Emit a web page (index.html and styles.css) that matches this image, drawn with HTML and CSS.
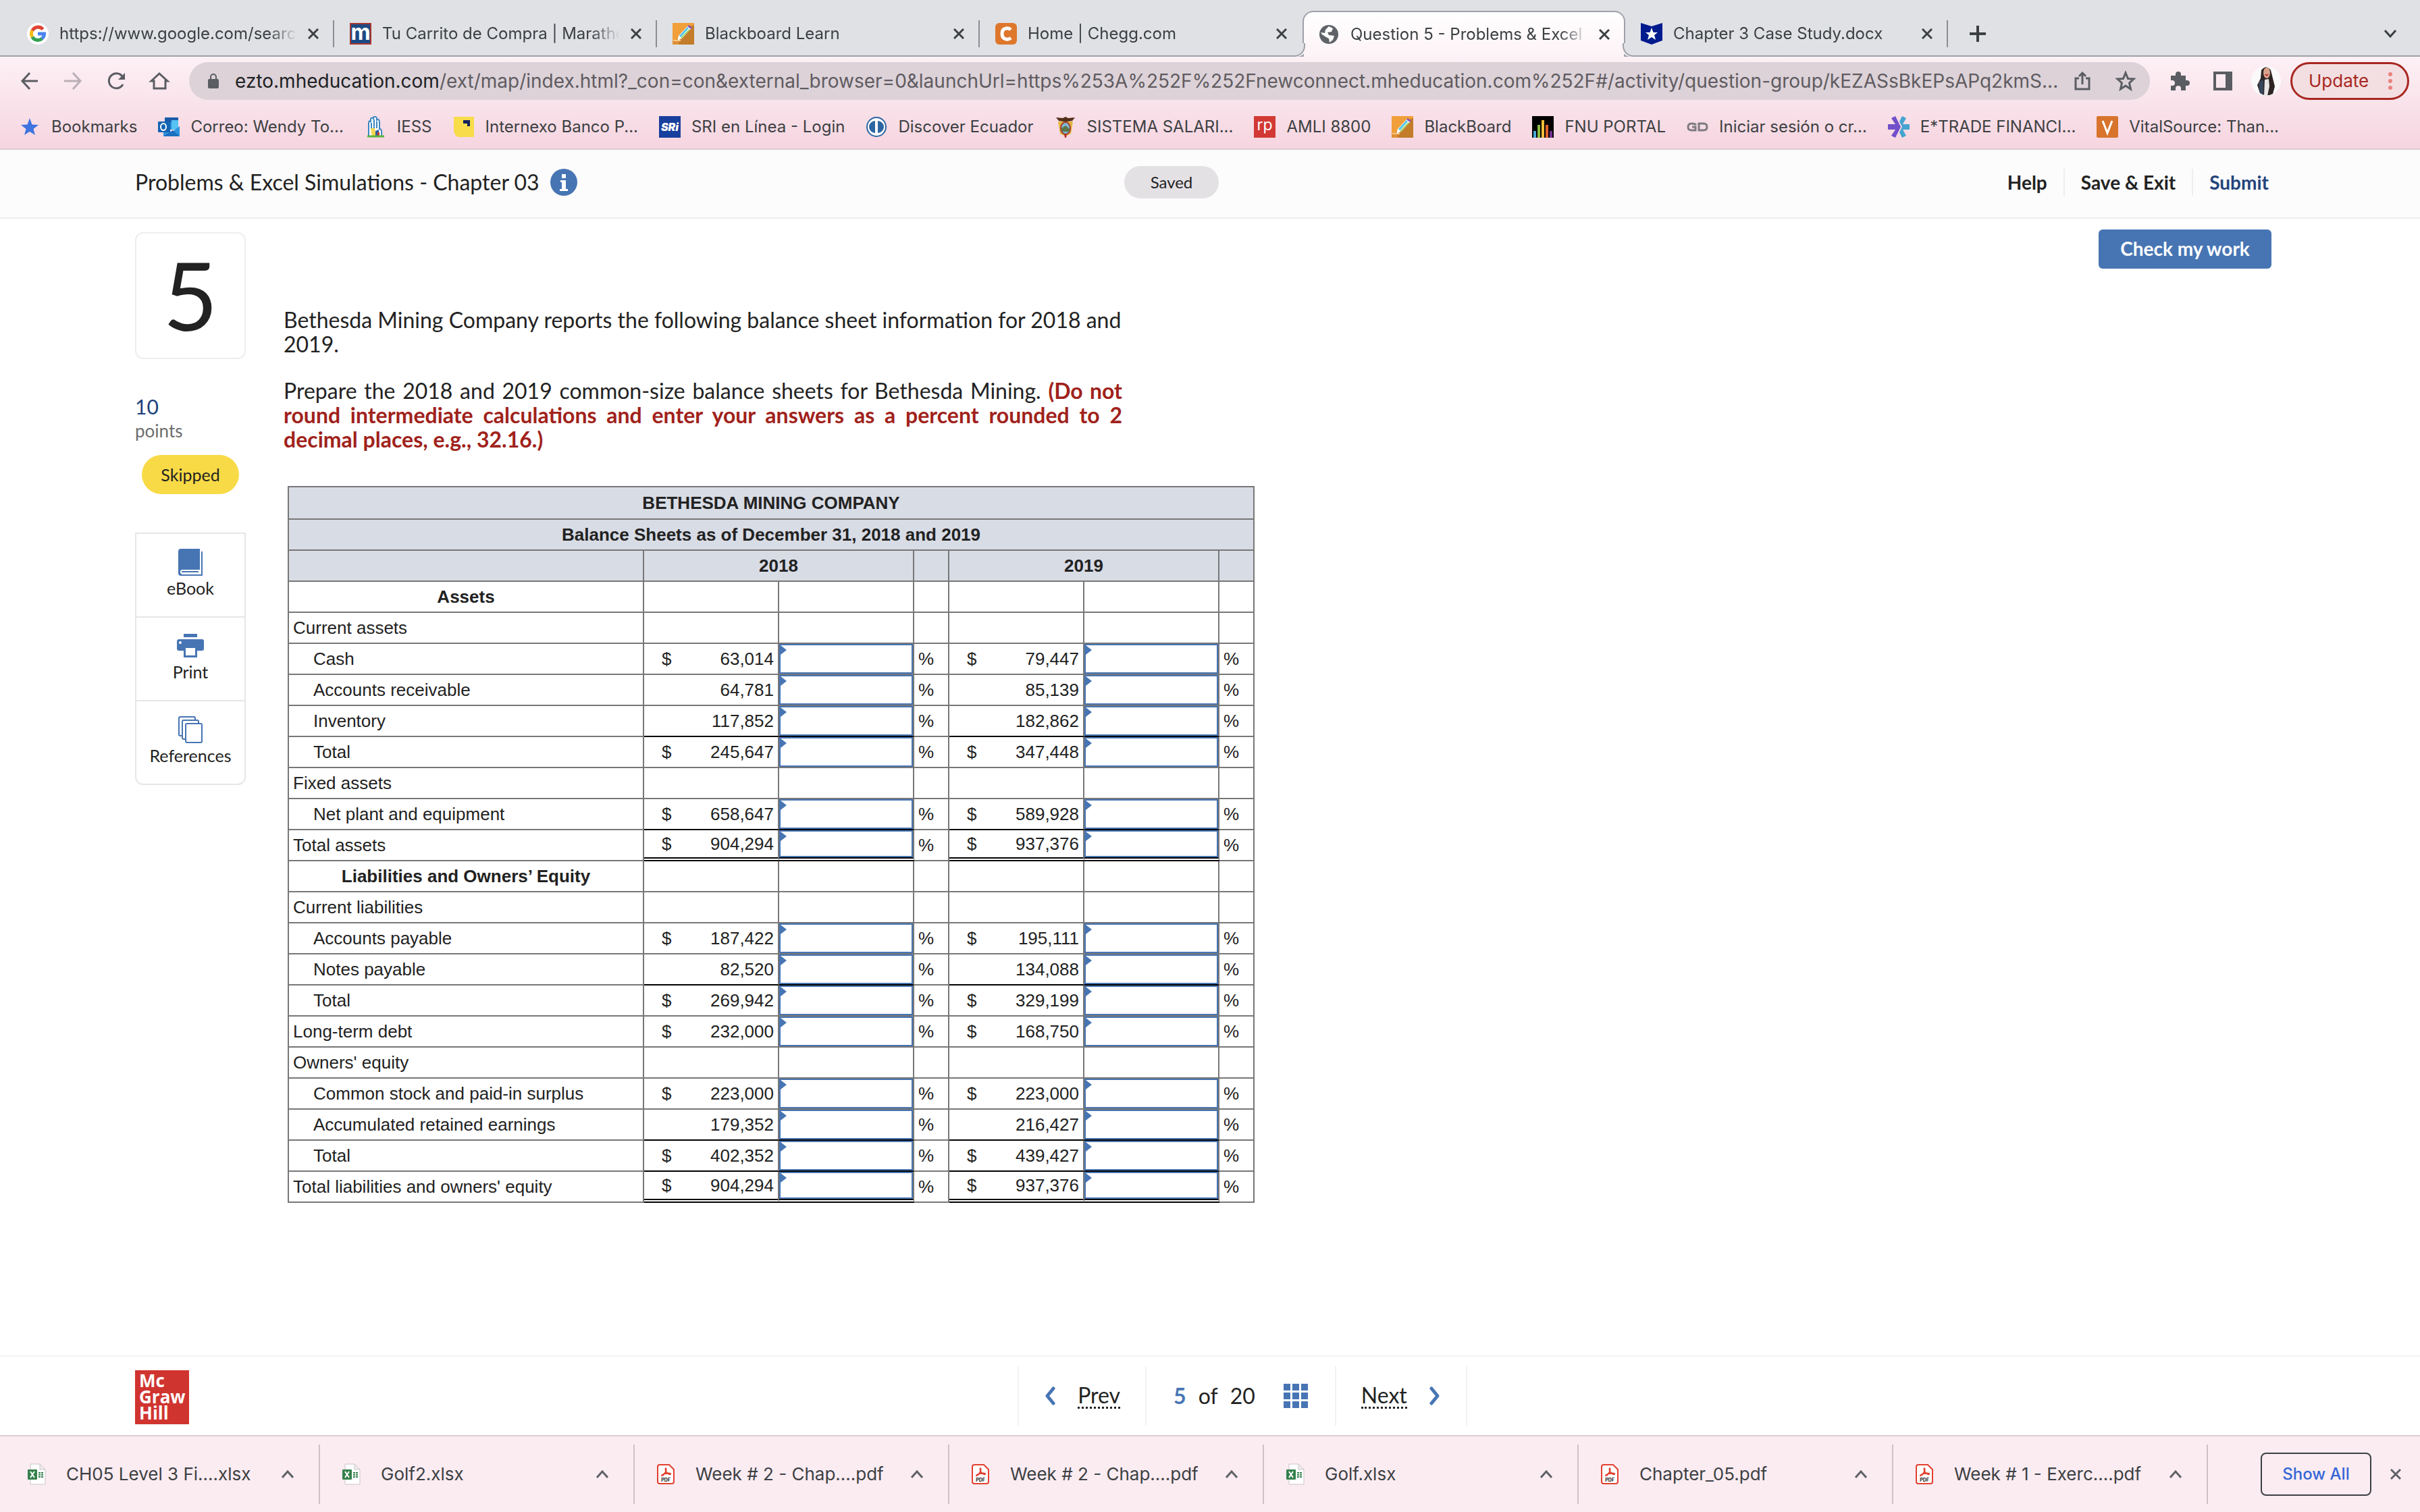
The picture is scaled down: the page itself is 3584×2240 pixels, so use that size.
FILE: index.html
```html
<!DOCTYPE html>
<html lang="en">
<head>
 <meta charset="UTF-8">
 <meta name="viewport" content="width=device-width,initial-scale=1.0">
 <title>Question 5 - Problems &amp; Excel Simulations - Chapter 03</title>
 <link rel="stylesheet" href="styles.css">
</head>
<body>
<!-- shared icons -->
<svg class="defs" aria-hidden="true">
 <symbol id="i-close" viewBox="0 0 16 16"><path d="M1 1L15 15M15 1L1 15" fill="none" stroke="currentColor" stroke-width="3"/></symbol>
 <symbol id="i-up" viewBox="0 0 18 12"><path d="M1 11L9 2L17 11" fill="none" stroke="currentColor" stroke-width="3"/></symbol>
 <symbol id="i-pencil" viewBox="0 0 32 32">
  <rect width="32" height="32" fill="#f09f3a"/><path d="M32 3V32H10L4 26L26 5Z" fill="#c27c2a"/><path d="M0 26H11L8 32H0Z" fill="#e08f35"/>
  <path d="M7 26L9 19L23 4L28 8L14 23Z" fill="#fff"/><path d="M10 19L22 6L24 8L12 21Z" fill="#4fc3e8"/><path d="M12 22L25 9L26 10L13 23Z" fill="#7fc843"/><path d="M22 5L24 3L29 7L27 9Z" fill="#8c4fb5"/><path d="M1 26H12" stroke="#f8c98a" stroke-width="2"/>
 </symbol>
 <symbol id="i-xls" viewBox="0 0 28 32">
  <path d="M5 1H19L27 9V31H5Z" fill="#fff" stroke="#c9c4c8" stroke-width="1"/><path d="M19 1V9H27Z" fill="#eee" stroke="#c9c4c8"/>
  <path d="M17 13h3v2h-3zM21 13h3v2h-3zM17 16h3v2h-3zM21 16h3v2h-3zM17 19h3v2h-3zM21 19h3v2h-3z" fill="#2f7d4a"/>
  <rect x="1" y="9" width="14" height="15" rx="1" fill="#35804c"/><path d="M5 12L11 21M11 12L5 21" stroke="#fff" stroke-width="2"/>
 </symbol>
 <symbol id="i-pdf" viewBox="0 0 28 32">
  <path d="M5 2H19L26 9V27Q26 30 23 30H5Q2 30 2 27V5Q2 2 5 2Z" fill="#fff" stroke="#e2402f" stroke-width="2"/>
  <path d="M8 18C12 17 15 12 14.500 8C14 6 13 8 14 11C15 14 19 17 21 16C22 15 19 14 15 15C12 15 8 17 8 18Z" fill="none" stroke="#e2402f" stroke-width="2"/>
  <text x="14" y="27" font-size="7" font-weight="700" text-anchor="middle" fill="#222">PDF</text>
 </symbol>
</svg>

<header class="browser">
 <nav class="tabs" aria-label="Tabs">
  <div class="tab">
   <svg class="fav" viewBox="0 0 32 32"><circle cx="16" cy="16" r="16" fill="#fff"/><g fill="none" stroke-width="5"><path d="M23.500 9.500A9.500 9.500 0 0 0 7.800 11.300" stroke="#e04435"/><path d="M7.800 11.300A9.500 9.500 0 0 0 7.800 20.700" stroke="#f5bb16"/><path d="M7.800 20.700A9.500 9.500 0 0 0 22.100 23.300" stroke="#34a152"/><path d="M22.100 23.300A9.500 9.500 0 0 0 25.500 16H16" stroke="#4a85ee"/></g></svg>
   <span class="tab-title">https://www.google.com/search</span>
   <button class="close" aria-label="Close tab"><svg><use href="#i-close"/></svg></button>
  </div>
  <div class="tab">
   <svg class="fav" viewBox="0 0 32 32"><rect x="1" y="1" width="30" height="30" fill="#1d4a85" stroke="#a8362f" stroke-width="2"/><text x="16" y="25" font-size="32" font-weight="700" text-anchor="middle" fill="#fff">m</text></svg>
   <span class="tab-title">Tu Carrito de Compra | Marathon</span>
   <button class="close" aria-label="Close tab"><svg><use href="#i-close"/></svg></button>
  </div>
  <div class="tab">
   <svg class="fav"><use href="#i-pencil"/></svg>
   <span class="tab-title">Blackboard Learn</span>
   <button class="close" aria-label="Close tab"><svg><use href="#i-close"/></svg></button>
  </div>
  <div class="tab before-active">
   <svg class="fav" viewBox="0 0 32 32"><rect width="32" height="32" rx="6" fill="#de772c"/><path d="M23 10Q20 7 16 8Q10 9 10 16Q10 23 16 24Q20 25 23 22" fill="none" stroke="#fff" stroke-width="5"/></svg>
   <span class="tab-title">Home | Chegg.com</span>
   <button class="close" aria-label="Close tab"><svg><use href="#i-close"/></svg></button>
  </div>
  <div class="tab active">
   <svg class="fav" viewBox="0 0 32 32"><circle cx="16" cy="16" r="14" fill="#5f6368"/><path d="M16 4L22 7L20 12L14 13L16 17L24 18L22 24L17 28L16 22L12 20L6 16L4 13L10 14L11 9Z" fill="#fff"/></svg>
   <span class="tab-title">Question 5 - Problems &amp; Excel Simulations</span>
   <button class="close" aria-label="Close tab"><svg><use href="#i-close"/></svg></button>
  </div>
  <div class="tab">
   <svg class="fav" viewBox="0 0 32 32"><path d="M0 0L16 5L32 0V26L16 32L0 26Z" fill="#001b8d"/><path d="M16 7L18.500 14H25L20 18L22 25L16 21L10 25L12 18L7 14H13.500Z" fill="#fff"/></svg>
   <span class="tab-title">Chapter 3 Case Study.docx</span>
   <button class="close" aria-label="Close tab"><svg><use href="#i-close"/></svg></button>
  </div>
  <button class="new-tab" aria-label="New tab"><svg viewBox="0 0 24 24"><path d="M12 0V24M0 12H24" stroke="currentColor" stroke-width="4"/></svg></button>
  <button class="tab-search" aria-label="Search tabs"><svg viewBox="0 0 18 12"><path d="M1 1L9 10L17 1" fill="none" stroke="currentColor" stroke-width="3"/></svg></button>
 </nav>

 <div class="toolbar">
  <button class="tool" aria-label="Back"><svg viewBox="0 0 32 32"><path d="M28 16H6M16 4L5 16L16 28" fill="none" stroke="currentColor" stroke-width="3"/></svg></button>
  <button class="tool off" aria-label="Forward" disabled><svg viewBox="0 0 32 32"><path d="M3 16H26M16 4L27 16L16 28" fill="none" stroke="currentColor" stroke-width="3"/></svg></button>
  <button class="tool" aria-label="Reload"><svg viewBox="0 0 32 32"><path d="M26 21A11 11 0 1 1 25 9" fill="none" stroke="currentColor" stroke-width="3"/><path d="M29 4V14H19Z" fill="currentColor"/></svg></button>
  <button class="tool" aria-label="Home"><svg viewBox="0 0 32 32"><path d="M4 16L16 5L28 16H25V27H8V16Z" fill="none" stroke="currentColor" stroke-width="3"/></svg></button>
  <div class="address">
   <svg class="lock" viewBox="0 0 18 22"><rect x="1" y="8" width="16" height="14" rx="2" fill="currentColor"/><path d="M5 9V5A4 4 0 0 1 13 5V9" fill="none" stroke="currentColor" stroke-width="2"/></svg>
   <span class="url"><b>ezto.mheducation.com</b>/ext/map/index.html?_con=con&amp;external_browser=0&amp;launchUrl=https%253A%252F%252Fnewconnect.mheducation.com%252F#/activity/question-group/kEZASsBkEPsAPq2kmS...</span>
   <button class="tool" aria-label="Share"><svg viewBox="0 0 32 32"><path d="M11 12H6V28H26V12H21M16 21V4M11 9L16 4L21 9" fill="none" stroke="currentColor" stroke-width="3"/></svg></button>
   <button class="tool" aria-label="Bookmark this page"><svg viewBox="0 0 32 32"><path d="M16 4L19.500 12.500L28 13L21.500 19L23.500 28L16 23L8.500 28L10.500 19L4 13L12.500 12.500Z" fill="none" stroke="currentColor" stroke-width="3"/></svg></button>
  </div>
  <button class="tool" aria-label="Extensions"><svg viewBox="0 0 32 32"><path d="M3 8H10V6A4 4 0 0 1 18 6V8H25V15H27A4 4 0 0 1 27 23H25V30H18V27A4 4 0 0 0 10 27V30H3V23H5A4 4 0 0 0 5 15H3Z" fill="currentColor"/></svg></button>
  <button class="tool" aria-label="Side panel"><svg viewBox="0 0 32 32"><path d="M2 2H30V30H2ZM6 6V26H20V6Z" fill="currentColor" fill-rule="evenodd"/></svg></button>
  <button class="avatar" aria-label="Profile"><svg viewBox="0 0 44 44"><circle cx="22" cy="22" r="22" fill="#fbfafa"/><path d="M15 6Q22 -3 29 6L32 18L35 30L32 41Q22 46 13 40L9 28L14 18Z" fill="#2c2524"/><ellipse cx="23" cy="10" rx="5" ry="8" fill="#d9a28c"/><path d="M20 20L26 19L27 30L24 44H19Z" fill="#e9e6e8"/><path d="M11 24L18 20L18 43L12 38Z" fill="#38465c"/><path d="M21 12Q23 15 25 12" stroke="#b5343a" stroke-width="2" fill="none"/></svg></button>
  <button class="update">Update<svg viewBox="0 0 6 28"><circle cx="3" cy="4" r="3"/><circle cx="3" cy="14" r="3"/><circle cx="3" cy="24" r="3"/></svg></button>
 </div>

 <nav class="bookmarks" aria-label="Bookmarks">
  <a href="#"><svg class="fav" viewBox="0 0 32 32"><path d="M16 3L19.500 12.500L29 13L21.500 19L24 28L16 23L8 28L10.500 19L3 13L12.500 12.500Z" fill="#3f74e0"/></svg>Bookmarks</a>
  <a href="#"><svg class="fav" viewBox="0 0 32 32"><rect x="10" y="2" width="20" height="18" fill="#1a5ba8"/><path d="M10 9H20V20H10Z" fill="#2b8ad8"/><path d="M20 6H30V20H20Z" fill="#55c2f3"/><path d="M8 17L20 24L32 15V30H8Z" fill="#2e92dd"/><path d="M8 30L22 21L32 30Z" fill="#1b6fc0"/><rect y="8" width="18" height="16" rx="1" fill="#1464b4"/><ellipse cx="8" cy="16" rx="4" ry="5" fill="none" stroke="#fff" stroke-width="2"/></svg>Correo: Wendy To...</a>
  <a href="#"><svg class="fav" viewBox="0 0 32 32"><path d="M6 30V10Q7 5 9 9V4Q11 1 13 4V2Q16 -1 18 3V6Q22 3 22 10V19Q26 18 25 30" fill="#fff" stroke="#3a86c0" stroke-width="2"/><path d="M10 10V20M14 5V18M18 8V18" stroke="#3a86c0" stroke-width="2"/><path d="M9 18H15L17 30H11Z" fill="#f2d64e"/><path d="M16 22L21 20V30H16Z" fill="#2b5ca5"/><path d="M19 24H22V30H19Z" fill="#cc392f"/><path d="M4 30H29" stroke="#5ab53e" stroke-width="3"/></svg>IESS</a>
  <a href="#"><svg class="fav" viewBox="0 0 32 32"><path d="M1 1H31V31H8Q1 29 1 20Z" fill="#f8dc49"/><path d="M15 6H25V15H21V11H15Z" fill="#12225e"/></svg>Internexo Banco P...</a>
  <a href="#"><svg class="fav" viewBox="0 0 32 32"><rect width="32" height="32" fill="#193f9c"/><text x="16" y="22" font-size="16" font-weight="900" font-style="italic" text-anchor="middle" fill="#fff">SRi</text></svg>SRI en Línea - Login</a>
  <a href="#"><svg class="fav" viewBox="0 0 32 32"><circle cx="16" cy="16" r="14" fill="#fff" stroke="#2c66a2" stroke-width="2"/><path d="M14 7A9 9 0 0 0 14 25ZM18 7A9 9 0 0 1 18 25Z" fill="#2c66a2"/></svg>Discover Ecuador</a>
  <a href="#"><svg class="fav" viewBox="0 0 32 32"><path d="M2 2L12 3L16 1L20 3L30 2L26 7L19 8H13L6 7Z" fill="#53301a"/><path d="M5 8H27L24 26L16 30L8 26Z" fill="#e3b63f"/><ellipse cx="16" cy="18" rx="7" ry="9" fill="#7db9d6" stroke="#a53b2f" stroke-width="2"/><path d="M10 18L16 14L22 19V23H10Z" fill="#5e7548"/><path d="M14 27H18L17 32H15Z" fill="#bb2f2a"/></svg>SISTEMA SALARI...</a>
  <a href="#"><svg class="fav" viewBox="0 0 32 32"><rect width="32" height="32" fill="#d23934"/><text x="16" y="21" font-size="23" text-anchor="middle" fill="#fff">rp</text></svg>AMLI 8800</a>
  <a href="#"><svg class="fav"><use href="#i-pencil"/></svg>BlackBoard</a>
  <a href="#"><svg class="fav" viewBox="0 0 32 32"><rect width="32" height="32" fill="#000"/><path d="M2 22H6V32H2Z" fill="#4aa8d8"/><path d="M8 13H12V32H8Z" fill="#8dbb3f"/><path d="M14 6H18V32H14Z" fill="#f2bd38"/><path d="M20 13H24V32H20Z" fill="#e2612d"/><path d="M26 22H30V32H26Z" fill="#713293"/></svg>FNU PORTAL</a>
  <a href="#"><svg class="fav" viewBox="0 0 32 32"><path d="M14 13Q12 11 7 11Q2 11 2 16Q2 21 7 21H13V16H8M18 11H25Q30 11 30 16Q30 21 25 21H18Z" fill="none" stroke="#7f7b80" stroke-width="3"/></svg>Iniciar sesión o cr...</a>
  <a href="#"><svg class="fav" viewBox="0 0 32 32"><path d="M0 12H11L5 3L11 0L19 16L11 32L5 29L11 20H0Z" fill="#7150ca"/><path d="M21 0L27 3L22 12H32V20H22L27 29L21 32L17 24L21 16L17 8Z" fill="#46a3d0"/></svg>E*TRADE FINANCI...</a>
  <a href="#"><svg class="fav" viewBox="0 0 32 32"><rect width="32" height="32" rx="2" fill="#d8742c"/><path d="M9 7L16 25L23 7" fill="none" stroke="#fff" stroke-width="3"/></svg>VitalSource: Than...</a>
 </nav>
</header>

<section class="page-head">
 <h1>Problems &amp; Excel Simulations - Chapter 03
  <button class="info" aria-label="Assignment info"><svg viewBox="0 0 40 40"><circle cx="20" cy="20" r="20" fill="#4775b4"/><path d="M17 8H23V14H17ZM15 17H23V30H26V33H14V30H17V20H15Z" fill="#fff"/></svg></button>
 </h1>
 <div class="saved"><span>Saved</span></div>
 <nav class="actions">
  <a href="#">Help</a>
  <a href="#">Save &amp; Exit</a>
  <a href="#" class="submit">Submit</a>
 </nav>
</section>

<main class="question">
 <aside class="side">
  <div class="number">5</div>
  <div class="points">10</div>
  <div class="points-label">points</div>
  <div class="status">Skipped</div>
  <nav class="resources">
   <a href="#"><svg viewBox="0 0 40 40"><path d="M6 0H34V31H8Q5 31 5 34Q5 37 8 38H34V40H6Q2 40 2 36V4Q2 0 6 0Z" fill="#4775b4"/><path d="M7 34H32" stroke="#4775b4" stroke-width="2"/><path d="M37 4V39H33" fill="none" stroke="#4775b4" stroke-width="2"/></svg>eBook</a>
   <a href="#"><svg viewBox="0 0 40 40"><path d="M10 2H30V7H10ZM3 10H37Q40 10 40 13V24Q40 27 37 27H30V37H10V27H3Q0 27 0 24V13Q0 10 3 10ZM13 23V34H27V23Z" fill="#4775b4" fill-rule="evenodd"/><circle cx="5" cy="15" r="2" fill="#fff"/></svg>Print</a>
   <a href="#"><svg viewBox="0 0 40 40"><g fill="#fff" stroke="#4775b4" stroke-width="2"><rect x="3" y="1" width="24" height="28" rx="2"/><rect x="8" y="6" width="24" height="28" rx="2"/><rect x="13" y="11" width="24" height="28" rx="2"/></g></svg>References</a>
  </nav>
 </aside>

 <article class="content">
  <p>Bethesda Mining Company reports the following balance sheet information for 2018 and 2019.</p>
  <p class="task">Prepare the 2018 and 2019 common-size balance sheets for Bethesda Mining. <strong>(Do not round intermediate calculations and enter your answers as a percent rounded to 2 decimal places, e.g., 32.16.)</strong></p>

  <table class="sheet">
   <colgroup><col class="c-name"><col class="c-num"><col class="c-num"><col class="c-pct"><col class="c-num"><col class="c-num"><col class="c-pct"></colgroup>
   <thead>
    <tr><th colspan="7">BETHESDA MINING COMPANY</th></tr>
    <tr><th colspan="7">Balance Sheets as of December 31, 2018 and 2019</th></tr>
    <tr><th></th><th colspan="2">2018</th><th></th><th colspan="2">2019</th><th></th></tr>
   </thead>
   <tbody>
    <tr><th>Assets</th><td></td><td></td><td></td><td></td><td></td><td></td></tr>
    <tr><td>Current assets</td><td></td><td></td><td></td><td></td><td></td><td></td></tr>
    <tr><td class="sub">Cash</td><td class="num"><div><i>$</i>63,014</div></td><td class="ans"><input aria-label="Cash 2018"></td><td>%</td><td class="num"><div><i>$</i>79,447</div></td><td class="ans"><input aria-label="Cash 2019"></td><td>%</td></tr>
    <tr><td class="sub">Accounts receivable</td><td class="num"><div>64,781</div></td><td class="ans"><input aria-label="Accounts receivable 2018"></td><td>%</td><td class="num"><div>85,139</div></td><td class="ans"><input aria-label="Accounts receivable 2019"></td><td>%</td></tr>
    <tr class="line"><td class="sub">Inventory</td><td class="num"><div>117,852</div></td><td class="ans"><input aria-label="Inventory 2018"></td><td>%</td><td class="num"><div>182,862</div></td><td class="ans"><input aria-label="Inventory 2019"></td><td>%</td></tr>
    <tr><td class="sub">Total</td><td class="num"><div><i>$</i>245,647</div></td><td class="ans"><input aria-label="Total current assets 2018"></td><td>%</td><td class="num"><div><i>$</i>347,448</div></td><td class="ans"><input aria-label="Total current assets 2019"></td><td>%</td></tr>
    <tr><td>Fixed assets</td><td></td><td></td><td></td><td></td><td></td><td></td></tr>
    <tr class="line"><td class="sub">Net plant and equipment</td><td class="num"><div><i>$</i>658,647</div></td><td class="ans"><input aria-label="Net plant and equipment 2018"></td><td>%</td><td class="num"><div><i>$</i>589,928</div></td><td class="ans"><input aria-label="Net plant and equipment 2019"></td><td>%</td></tr>
    <tr class="double"><td>Total assets</td><td class="num"><div><i>$</i>904,294</div></td><td class="ans"><input aria-label="Total assets 2018"></td><td>%</td><td class="num"><div><i>$</i>937,376</div></td><td class="ans"><input aria-label="Total assets 2019"></td><td>%</td></tr>
    <tr><th>Liabilities and Owners’ Equity</th><td></td><td></td><td></td><td></td><td></td><td></td></tr>
    <tr><td>Current liabilities</td><td></td><td></td><td></td><td></td><td></td><td></td></tr>
    <tr><td class="sub">Accounts payable</td><td class="num"><div><i>$</i>187,422</div></td><td class="ans"><input aria-label="Accounts payable 2018"></td><td>%</td><td class="num"><div><i>$</i>195,111</div></td><td class="ans"><input aria-label="Accounts payable 2019"></td><td>%</td></tr>
    <tr class="line"><td class="sub">Notes payable</td><td class="num"><div>82,520</div></td><td class="ans"><input aria-label="Notes payable 2018"></td><td>%</td><td class="num"><div>134,088</div></td><td class="ans"><input aria-label="Notes payable 2019"></td><td>%</td></tr>
    <tr><td class="sub">Total</td><td class="num"><div><i>$</i>269,942</div></td><td class="ans"><input aria-label="Total current liabilities 2018"></td><td>%</td><td class="num"><div><i>$</i>329,199</div></td><td class="ans"><input aria-label="Total current liabilities 2019"></td><td>%</td></tr>
    <tr><td>Long-term debt</td><td class="num"><div><i>$</i>232,000</div></td><td class="ans"><input aria-label="Long-term debt 2018"></td><td>%</td><td class="num"><div><i>$</i>168,750</div></td><td class="ans"><input aria-label="Long-term debt 2019"></td><td>%</td></tr>
    <tr><td>Owners' equity</td><td></td><td></td><td></td><td></td><td></td><td></td></tr>
    <tr><td class="sub">Common stock and paid-in surplus</td><td class="num"><div><i>$</i>223,000</div></td><td class="ans"><input aria-label="Common stock 2018"></td><td>%</td><td class="num"><div><i>$</i>223,000</div></td><td class="ans"><input aria-label="Common stock 2019"></td><td>%</td></tr>
    <tr class="line"><td class="sub">Accumulated retained earnings</td><td class="num"><div>179,352</div></td><td class="ans"><input aria-label="Retained earnings 2018"></td><td>%</td><td class="num"><div>216,427</div></td><td class="ans"><input aria-label="Retained earnings 2019"></td><td>%</td></tr>
    <tr class="line"><td class="sub">Total</td><td class="num"><div><i>$</i>402,352</div></td><td class="ans"><input aria-label="Total owners' equity 2018"></td><td>%</td><td class="num"><div><i>$</i>439,427</div></td><td class="ans"><input aria-label="Total owners' equity 2019"></td><td>%</td></tr>
    <tr class="double"><td>Total liabilities and owners' equity</td><td class="num"><div><i>$</i>904,294</div></td><td class="ans"><input aria-label="Total liabilities and equity 2018"></td><td>%</td><td class="num"><div><i>$</i>937,376</div></td><td class="ans"><input aria-label="Total liabilities and equity 2019"></td><td>%</td></tr>
   </tbody>
  </table>
 </article>

 <button class="check">Check my work</button>
</main>

<footer class="page-foot">
 <div class="logo">Mc<br>Graw<br>Hill</div>
 <nav class="pager">
  <a href="#"><svg class="arrow" viewBox="0 0 18 28"><path d="M14 3L5 14L14 25" fill="none" stroke="currentColor" stroke-width="5" stroke-linecap="round" stroke-linejoin="round"/></svg><span>Prev</span></a>
  <div class="pos"><b>5</b><span>of</span><span>20</span><button aria-label="All questions"><svg viewBox="0 0 36 36"><path d="M0 0h10v10H0zM13 0h10v10H13zM26 0h10v10H26zM0 13h10v10H0zM13 13h10v10H13zM26 13h10v10H26zM0 26h10v10H0zM13 26h10v10H13zM26 26h10v10H26z" fill="#4775b4"/></svg></button></div>
  <a href="#"><span>Next</span><svg class="arrow" viewBox="0 0 18 28"><path d="M4 3L13 14L4 25" fill="none" stroke="currentColor" stroke-width="5" stroke-linecap="round" stroke-linejoin="round"/></svg></a>
 </nav>
</footer>

<section class="downloads" aria-label="Downloads">
 <div class="file"><svg class="file-icon"><use href="#i-xls"/></svg><span>CH05 Level 3 Fi....xlsx</span><button aria-label="File menu"><svg><use href="#i-up"/></svg></button></div>
 <div class="file"><svg class="file-icon"><use href="#i-xls"/></svg><span>Golf2.xlsx</span><button aria-label="File menu"><svg><use href="#i-up"/></svg></button></div>
 <div class="file"><svg class="file-icon"><use href="#i-pdf"/></svg><span>Week # 2 - Chap....pdf</span><button aria-label="File menu"><svg><use href="#i-up"/></svg></button></div>
 <div class="file"><svg class="file-icon"><use href="#i-pdf"/></svg><span>Week # 2 - Chap....pdf</span><button aria-label="File menu"><svg><use href="#i-up"/></svg></button></div>
 <div class="file"><svg class="file-icon"><use href="#i-xls"/></svg><span>Golf.xlsx</span><button aria-label="File menu"><svg><use href="#i-up"/></svg></button></div>
 <div class="file"><svg class="file-icon"><use href="#i-pdf"/></svg><span>Chapter_05.pdf</span><button aria-label="File menu"><svg><use href="#i-up"/></svg></button></div>
 <div class="file"><svg class="file-icon"><use href="#i-pdf"/></svg><span>Week # 1 - Exerc....pdf</span><button aria-label="File menu"><svg><use href="#i-up"/></svg></button></div>
 <button class="show-all">Show All</button>
 <button class="close" aria-label="Close downloads"><svg><use href="#i-close"/></svg></button>
</section>
</body>
</html>
```
FILE: styles.css
```css
*{
  box-sizing: border-box;
}
body{
  margin: 0;
  min-height: 100vh;
  display: flex;
  flex-direction: column;
  background: #fff;
  color: #222;
  font-family: Lato, "Open Sans", sans-serif;
  font-size: 32px;
  line-height: 36px;
}
a{
  color: inherit;
  text-decoration: none;
}
button{
  padding: 0;
  border: 0;
  background: none;
  color: inherit;
  font: inherit;
}
svg{
  display: block;
  flex: none;
}
.defs{
  position: absolute;
  width: 0;
  height: 0;
}

/* browser frame */
.browser, .downloads{
  font-family: Inter, Roboto, sans-serif;
  color: #3c4043;
}
.browser{
  border-bottom: 2px solid #d9ced4;
}
.fav{
  width: 32px;
  height: 32px;
}
.tabs{
  display: flex;
  align-items: flex-end;
  height: 84px;
  padding-left: 17px;
  background: #dfe1e5;
  box-shadow: inset 0 -2px #9ea1a9;
  font-size: 24px;
}
.tab{
  position: relative;
  display: flex;
  align-items: center;
  gap: 16px;
  width: 478px;
  height: 68px;
  padding: 0 23px;
  flex: 0 1 478px;
}
.tab::after{
  content: "";
  position: absolute;
  right: 0;
  top: 14px;
  width: 2px;
  height: 40px;
  background: #8a8d92;
}
.before-active::after{
  display: none;
}
.tab-title{
  flex: 1;
  overflow: hidden;
  white-space: nowrap;
  -webkit-mask-image: linear-gradient(90deg, #000 88%, transparent);
  mask-image: linear-gradient(90deg, #000 88%, transparent);
}
.close svg{
  width: 16px;
  height: 16px;
}
.active{
  padding: 0 21px;
  border: 2px solid #9ea1a9;
  border-bottom: 0;
  border-radius: 16px 16px 0 0;
  background: linear-gradient(#fff, #fdf3f7);
}
.active::before, .active::after{
  content: "";
  position: absolute;
  top: auto;
  bottom: 0;
  width: 18px;
  height: 18px;
  border: 2px solid #9ea1a9;
  border-top: 0;
  background: #dfe1e5;
}
.active::before{
  left: -18px;
  border-left: 0;
  border-radius: 0 0 16px 0;
  box-shadow: 3px 0 #fdf3f7;
  clip-path: inset(0 -3px 0 0);
}
.active::after{
  right: -18px;
  border-right: 0;
  border-radius: 0 0 0 16px;
  box-shadow: -3px 0 #fdf3f7;
  clip-path: inset(0 0 0 -3px);
}
.new-tab, .tab-search{
  height: 68px;
}
.new-tab{
  margin-left: 32px;
}
.new-tab svg{
  width: 24px;
  height: 24px;
}
.tab-search{
  margin: 0 35px 0 auto;
}
.tab-search svg{
  width: 18px;
  height: 12px;
}
.toolbar{
  display: flex;
  align-items: center;
  height: 72px;
  padding: 0 16px 0 28px;
  gap: 32px;
  background: linear-gradient(#fdf1f6, #f9e2ea);
  font-size: 28px;
}
.tool svg{
  width: 32px;
  height: 32px;
}
.tool{
  color: #5a5d62;
}
.off{
  color: #b9afb5;
}
.address{
  flex: 1;
  min-width: 0;
  display: flex;
  align-items: center;
  gap: 32px;
  height: 56px;
  margin-left: -4px;
  margin-right: -4px;
  padding: 0 20px 0 27px;
  border-radius: 28px;
  background: #dcd2d8;
}
.lock{
  width: 18px;
  height: 22px;
  color: #5a5d62;
}
.url{
  flex: 1;
  min-width: 0;
  margin: 0 -24px 0 -9px;
  overflow: hidden;
  white-space: nowrap;
  color: #5f5b60;
}
.url b{
  color: #202124;
  font-weight: 400;
}
.avatar svg{
  width: 44px;
  height: 44px;
}
.avatar{
  margin: 0 -6px;
}
.update{
  flex: none;
  display: flex;
  align-items: center;
  justify-content: space-between;
  width: 176px;
  height: 56px;
  margin-left: -12px;
  padding: 0 22px 0 24px;
  border: 3px solid #a82720;
  border-radius: 28px;
  background: #f3dfe2;
  color: #a82720;
  font-size: 26px;
}
.update svg{
  width: 6px;
  height: 28px;
  fill: #e8837d;
}
.bookmarks{
  display: flex;
  align-items: center;
  gap: 31px;
  height: 64px;
  padding-left: 28px;
  background: linear-gradient(#f9e2ea, #f6d5e0);
  font-size: 24px;
}
.bookmarks a{
  display: flex;
  align-items: center;
  gap: 16px;
  white-space: nowrap;
}

/* assignment header */
.page-head{
  display: grid;
  grid-template-columns: 46% 1fr auto;
  align-items: center;
  height: 102px;
  padding: 0 200px 4px;
  border-bottom: 2px solid #eee;
  background: #fcfcfc;
}
h1{
  display: flex;
  align-items: center;
  gap: 16px;
  margin: 0;
  font-size: 32px;
  font-weight: 400;
}
.info svg{
  width: 40px;
  height: 40px;
}
.saved span{
  display: inline-block;
  padding: 0 39px;
  border-radius: 24px;
  background: #e4e1e5;
  font-size: 24px;
  line-height: 48px;
}
.actions{
  display: flex;
  font-size: 28px;
  font-weight: 700;
}
.actions a{
  padding: 0 24px;
  line-height: 40px;
}
.actions a + a{
  border-left: 2px solid #eee;
}
.actions .submit{
  color: #24447b;
}

/* question */
.question{
  flex: 1;
  display: flex;
  align-items: flex-start;
  gap: 56px;
  padding: 20px 220px 56px 200px;
}
.side{
  width: 164px;
  flex: none;
}
.number{
  height: 188px;
  border: 2px solid #eee;
  border-radius: 12px;
  font-size: 140px;
  line-height: 180px;
  text-align: center;
}
.points{
  margin-top: 52px;
  color: #1d4179;
  font-size: 30px;
}
.points-label{
  color: #6d6d6d;
  font-size: 26px;
}
.status{
  width: 144px;
  margin: 18px auto 57px;
  border-radius: 30px;
  background: #f8da46;
  font-size: 25px;
  line-height: 58px;
  text-align: center;
}
.resources{
  border: 2px solid #e6e6e6;
  border-radius: 0 0 12px 12px;
}
.resources a{
  display: flex;
  flex-direction: column;
  align-items: center;
  height: 124px;
  padding-top: 22px;
  font-size: 25px;
}
.resources a:first-child{
  height: 122px;
}
.resources a + a{
  border-top: 2px solid #e6e6e6;
}
.resources svg{
  width: 40px;
  height: 40px;
}
.content{
  padding-top: 112px;
}
.content p{
  width: 1242px;
  margin: 0 0 33px;
}
.content .task{
  margin-bottom: 51px;
  text-align: justify;
}
.task strong{
  color: #a0221b;
}
.sheet{
  width: 1432px;
  margin-left: 6px;
  table-layout: fixed;
  border: 2px solid #777;
  border-width: 2px 0 0 2px;
  border-collapse: separate;
  border-spacing: 0;
  font-family: "Liberation Sans", Arial, sans-serif;
  font-size: 26px;
}
.c-name{
  width: 526px;
}
.c-num{
  width: 200px;
}
.c-pct{
  width: 52px;
}
.sheet th, .sheet td{
  height: 46px;
  padding: 0 6px;
  border: 2px solid #777;
  border-width: 0 2px 2px 0;
  line-height: 36px;
}
.sheet thead th{
  background: #d8dce5;
}
.sheet thead tr:first-child th{
  height: 48px;
}
.sheet .sub{
  padding-left: 36px;
}
.num div{
  display: flex;
  justify-content: flex-end;
}
.num i{
  margin: 0 auto 0 20px;
  font-style: normal;
}
.sheet .ans{
  position: relative;
  padding: 0;
}
.ans input{
  display: block;
  width: 100%;
  height: 44px;
  padding: 0 12px;
  border: 2px solid #4775b4;
  border-radius: 0;
  background: #fff;
  font: inherit;
}
.ans::before{
  content: "";
  position: absolute;
  left: 2px;
  top: 2px;
  width: 9px;
  height: 14px;
  background: #4775b4;
  clip-path: polygon(0 0, 100% 50%, 0 100%);
}
.line .num, .line .ans{
  border-bottom-color: #000;
}
.double .num, .double .ans{
  border-bottom: 6px double #000;
}
.double .ans input{
  height: 40px;
}
.check{
  width: 256px;
  height: 58px;
  margin: -4px 0 0 auto;
  padding-bottom: 2px;
  border-radius: 6px;
  background: #4775b4;
  color: #fff;
  font-size: 28px;
  font-weight: 700;
}

/* pager */
.page-foot{
  display: grid;
  grid-template-columns: 1fr auto 1fr;
  align-items: center;
  height: 118px;
  padding: 0 104px 0 200px;
  border-top: 2px solid #f2f2f2;
}
.logo{
  width: 80px;
  height: 80px;
  margin-top: 4px;
  padding: 3px 6px;
  background: #d0342f;
  color: #fff;
  font: 700 26px/24px "Open Sans", sans-serif;
}
.pager{
  display: flex;
  height: 88px;
  font-size: 32px;
  border-left: 2px solid #f2f2f2;
}
.pager > *{
  display: flex;
  align-items: center;
  gap: 32px;
  padding: 0 37px;
  border-right: 2px solid #f2f2f2;
}
.pager a span{
  border-bottom: 3px dotted #222;
  line-height: 34px;
}
.arrow{
  width: 18px;
  height: 28px;
  color: #4775b4;
}
.pager .pos{
  gap: 18px;
  padding: 0 40px;
}
.pos b{
  color: #4775b4;
}
.pos button{
  margin-left: 24px;
}
.pos svg{
  width: 36px;
  height: 36px;
}

/* download shelf */
.downloads{
  display: flex;
  align-items: center;
  height: 114px;
  padding-left: 8px;
  border-top: 2px solid #d9ced4;
  background: #fbecf2;
  font-size: 26px;
}
.file{
  display: flex;
  align-items: center;
  flex: 0 1 466px;
  height: 88px;
  padding: 0 37px 0 32px;
  border-right: 2px solid #cdc1c7;
}
.file-icon{
  width: 28px;
  height: 32px;
}
.file span{
  flex: 1;
  margin-left: 30px;
  white-space: nowrap;
}
.file button svg{
  width: 18px;
  height: 12px;
}
.file button, .downloads > .close{
  color: #5f6368;
}
.show-all{
  width: 164px;
  height: 64px;
  margin: 0 28px 0 auto;
  border: 2px solid #3c4043;
  border-radius: 8px;
  color: #3367d6;
  font-size: 24px;
  font-weight: 500;
}
.downloads > .close{
  margin-right: 28px;
}
```
